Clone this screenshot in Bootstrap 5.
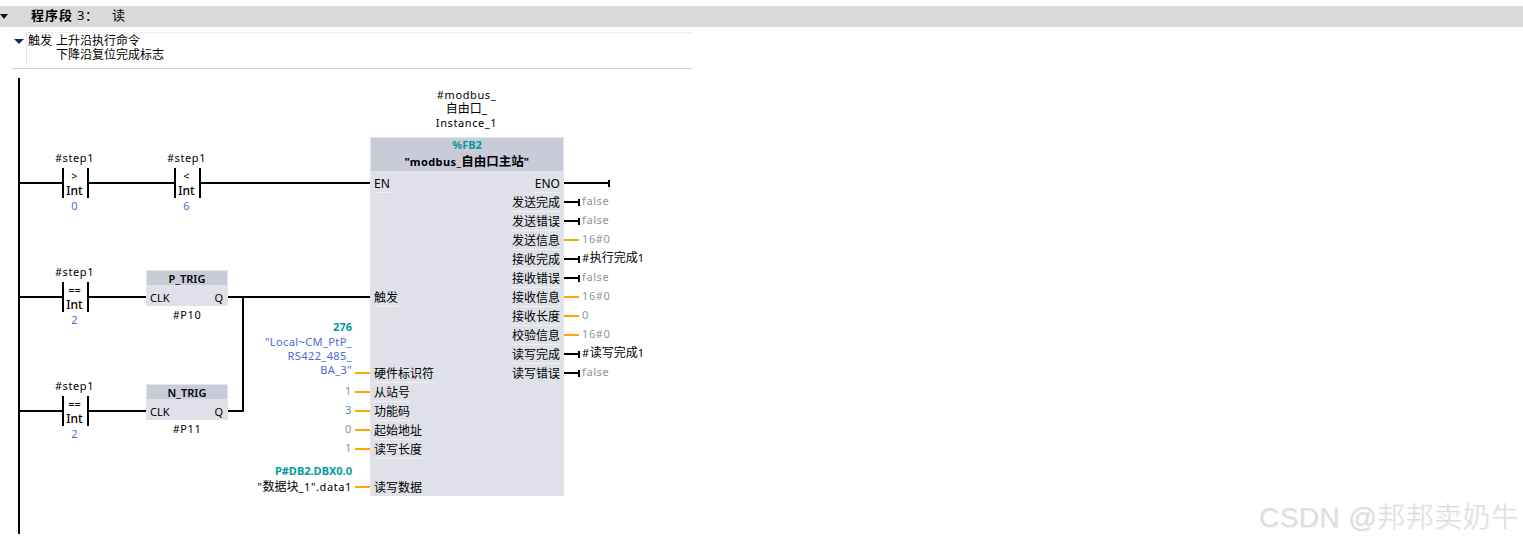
<!DOCTYPE html>
<html lang="zh">
<head>
<meta charset="utf-8">
<title>程序段 3</title>
<link href="https://cdn.jsdelivr.net/npm/bootstrap@5.3.0/dist/css/bootstrap.min.css" rel="stylesheet">
<style>
body{background:#fff;color:#000;font-family:"Noto Sans","Noto Sans CJK SC",sans-serif;font-size:11px;line-height:14px;overflow:hidden}
.seg-bar{height:21px;margin-top:6px;background:#d9d9d9;font-size:13px}
.seg-tri{width:31px}
.seg-title{width:81px;padding-bottom:3px}
.seg-title b{letter-spacing:1px}
.seg-text{padding-bottom:3px}
.cmt-wrap{width:680px;height:37px;margin:5px 0 0 12px;border-bottom:1px solid #cfd0e6}
.cmt-tri{width:14px;padding:7px 0 0 2px}
.cmt-box{height:33px;border-top:1px solid #eee;border-left:1px solid #e4e4e4;font-size:12px;padding:1px 0 0 1px}
.cmt-key{width:28px}
.lad{height:476px}
.wires{top:0;left:0}
.txt{letter-spacing:.6px;white-space:nowrap}
.cjk{font-size:12px;letter-spacing:0}
.blue{color:#4a68dc;letter-spacing:.4px}
.teal{color:#009c9c;font-weight:700;letter-spacing:0}
.grey{color:#8b93a0}
.mid{color:#3f8f9f}
.ctc{width:61px}
.ctc-name{height:17px;padding-right:2px}
.ctc-bars{width:27px;height:30px;border-left:2px solid #000;border-right:2px solid #000;padding-right:2px}
.ctc-bars>div{height:15px;line-height:15px}
.ctc-type{font-size:12px;font-weight:500}
.ctc-val{margin-top:1px;padding-right:2px}
.trg{width:82px}
.trg-box{height:36px;background:#dfe0e8;border:1px solid #e4e5ec;border-bottom:0}
.trg-head{height:14px;background:#c9cbd9;line-height:15px}
.trg-row{height:21px;padding:6px 4px 0 3px}
.trg-name{margin-top:2px}
.fb{width:194px;height:359px;background:#dfe0e8;border:1px solid #e4e5ec;border-bottom:0}
.fb-head{height:33px;background:#c9cbd9}
.fb-no{height:13px;line-height:13px}
.fb-title{display:block;height:20px;line-height:22px;letter-spacing:.4px}
.fb-title .cjk{font-size:12.5px}
.fb-pins{padding:3px 3px 0}
.fb-pin{height:19px;font-size:12px;line-height:20px}
.fb-pin>span{display:inline-block;height:19px;border-bottom:1px solid #f1f1f5}
.fb-pin>span.end{border-bottom:0}
.lbl-r{width:140px;left:212px}
.lbl-l{left:582px}
.inst{left:406px;width:121px;top:19px}
.stamp{right:4px;bottom:9px;font-family:"Liberation Sans","Noto Sans CJK SC",sans-serif;font-size:28px;font-weight:300;line-height:36px;color:#dedede;text-shadow:1px 1px 1px #f0f0f0;letter-spacing:.4px;white-space:nowrap}
</style>
</head>
<body class="m-0 position-relative">

<div class="seg-bar d-flex align-items-center">
  <div class="seg-tri d-flex"><svg width="8" height="5" viewBox="0 0 8 5"><path d="M0 0H8L4 5Z" fill="#111"/></svg></div>
  <div class="seg-title txt"><b>程序段</b> 3：</div>
  <div class="seg-text">读</div>
</div>

<div class="cmt-wrap d-flex">
  <div class="cmt-tri"><svg width="10" height="5" viewBox="0 0 10 5" class="d-block"><path d="M0 0H10L5 5Z" fill="#102a66"/></svg></div>
  <div class="cmt-box flex-grow-1 d-flex">
    <div class="cmt-key">触发</div>
    <div>上升沿执行命令<br>下降沿复位完成标志</div>
  </div>
</div>

<div class="lad position-relative">
  <svg class="wires position-absolute" width="1523" height="476" viewBox="0 69 1523 476">
    <g stroke="#000" stroke-width="2" fill="none">
      <path d="M19 78V534"/>
      <path d="M20 183H62M89 183H174M201 183H370"/>
      <path d="M20 297H62M89 297H146M228 297H370"/>
      <path d="M20 411H62M89 411H146M228 411H243M243 297V412"/>
      <path d="M564 183H609M609 180V187"/>
      <path d="M564 202H579M579 199V206M564 221H579M579 218V225M564 259H579M579 256V263M564 278H579M579 275V282M564 354H579M579 351V358M564 373H579M579 370V377"/>
    </g>
    <g stroke="#ffa500" stroke-width="2" fill="none">
      <path d="M564 240H579M564 297H579M564 316H579M564 335H579"/>
      <path d="M355 373H370M355 392H370M355 411H370M355 430H370M355 449H370M355 487H370"/>
    </g>
  </svg>

  <!-- contacts -->
  <div class="ctc position-absolute d-flex flex-column align-items-center text-center" style="left:45px;top:82px">
    <div class="ctc-name txt">#step1</div>
    <div class="ctc-bars"><div>&gt;</div><div class="ctc-type">Int</div></div>
    <div class="ctc-val blue txt">0</div>
  </div>
  <div class="ctc position-absolute d-flex flex-column align-items-center text-center" style="left:157px;top:82px">
    <div class="ctc-name txt">#step1</div>
    <div class="ctc-bars"><div>&lt;</div><div class="ctc-type">Int</div></div>
    <div class="ctc-val blue txt">6</div>
  </div>
  <div class="ctc position-absolute d-flex flex-column align-items-center text-center" style="left:45px;top:196px">
    <div class="ctc-name txt">#step1</div>
    <div class="ctc-bars"><div>==</div><div class="ctc-type">Int</div></div>
    <div class="ctc-val blue txt">2</div>
  </div>
  <div class="ctc position-absolute d-flex flex-column align-items-center text-center" style="left:45px;top:310px">
    <div class="ctc-name txt">#step1</div>
    <div class="ctc-bars"><div>==</div><div class="ctc-type">Int</div></div>
    <div class="ctc-val blue txt">2</div>
  </div>

  <!-- edge triggers -->
  <div class="trg position-absolute text-center" style="left:146px;top:201px">
    <div class="trg-box">
      <div class="trg-head fw-semibold">P_TRIG</div>
      <div class="trg-row d-flex justify-content-between"><span>CLK</span><span>Q</span></div>
    </div>
    <div class="trg-name txt">#P10</div>
  </div>
  <div class="trg position-absolute text-center" style="left:146px;top:315px">
    <div class="trg-box">
      <div class="trg-head fw-semibold">N_TRIG</div>
      <div class="trg-row d-flex justify-content-between"><span>CLK</span><span>Q</span></div>
    </div>
    <div class="trg-name txt">#P11</div>
  </div>

  <!-- FB instance -->
  <div class="inst position-absolute text-center txt">#modbus_<br><span class="cjk">自由口_</span><br>Instance_1</div>
  <div class="fb position-absolute" style="left:370px;top:68px">
    <div class="fb-head text-center">
      <div class="fb-no teal txt">%FB2</div>
      <b class="fb-title">"modbus_<span class="cjk">自由口主站</span>"</b>
    </div>
    <div class="fb-pins d-flex justify-content-between">
      <div>
        <div class="fb-pin"><span>EN</span></div>
        <div class="fb-pin"></div><div class="fb-pin"></div><div class="fb-pin"></div><div class="fb-pin"></div><div class="fb-pin"></div>
        <div class="fb-pin"><span>触发</span></div>
        <div class="fb-pin"></div><div class="fb-pin"></div><div class="fb-pin"></div>
        <div class="fb-pin"><span>硬件标识符</span></div>
        <div class="fb-pin"><span>从站号</span></div>
        <div class="fb-pin"><span>功能码</span></div>
        <div class="fb-pin"><span>起始地址</span></div>
        <div class="fb-pin"><span>读写长度</span></div>
        <div class="fb-pin"></div>
        <div class="fb-pin"><span class="end">读写数据</span></div>
      </div>
      <div class="text-end">
        <div class="fb-pin"><span>ENO</span></div>
        <div class="fb-pin"><span>发送完成</span></div>
        <div class="fb-pin"><span>发送错误</span></div>
        <div class="fb-pin"><span>发送信息</span></div>
        <div class="fb-pin"><span>接收完成</span></div>
        <div class="fb-pin"><span>接收错误</span></div>
        <div class="fb-pin"><span>接收信息</span></div>
        <div class="fb-pin"><span>接收长度</span></div>
        <div class="fb-pin"><span>校验信息</span></div>
        <div class="fb-pin"><span>读写完成</span></div>
        <div class="fb-pin"><span class="end">读写错误</span></div>
      </div>
    </div>
  </div>

  <!-- left operands -->
  <div class="lbl-r position-absolute text-end txt teal" style="top:251px">276</div>
  <div class="lbl-r position-absolute text-end txt blue" style="top:266px">"Local~CM_PtP_<br>RS422_485_<br>BA_3"</div>
  <div class="lbl-r position-absolute text-end txt grey" style="top:315px">1</div>
  <div class="lbl-r position-absolute text-end txt mid" style="top:334px">3</div>
  <div class="lbl-r position-absolute text-end txt grey" style="top:353px">0</div>
  <div class="lbl-r position-absolute text-end txt grey" style="top:372px">1</div>
  <div class="lbl-r position-absolute text-end txt teal" style="top:395px">P#DB2.DBX0.0</div>
  <div class="lbl-r position-absolute text-end txt" style="top:411px">"<span class="cjk">数据块</span>_1".data1</div>

  <!-- right operands -->
  <div class="lbl-l position-absolute txt grey" style="top:125px">false</div>
  <div class="lbl-l position-absolute txt grey" style="top:144px">false</div>
  <div class="lbl-l position-absolute txt grey" style="top:163px">16#0</div>
  <div class="lbl-l position-absolute txt" style="top:182px">#<span class="cjk">执行完成</span>1</div>
  <div class="lbl-l position-absolute txt grey" style="top:201px">false</div>
  <div class="lbl-l position-absolute txt grey" style="top:220px">16#0</div>
  <div class="lbl-l position-absolute txt grey" style="top:239px">0</div>
  <div class="lbl-l position-absolute txt grey" style="top:258px">16#0</div>
  <div class="lbl-l position-absolute txt" style="top:277px">#<span class="cjk">读写完成</span>1</div>
  <div class="lbl-l position-absolute txt grey" style="top:296px">false</div>
</div>

<div class="stamp position-absolute">CSDN @邦邦卖奶牛</div>

<script src="https://cdn.jsdelivr.net/npm/bootstrap@5.3.0/dist/js/bootstrap.bundle.min.js"></script>
</body>
</html>
